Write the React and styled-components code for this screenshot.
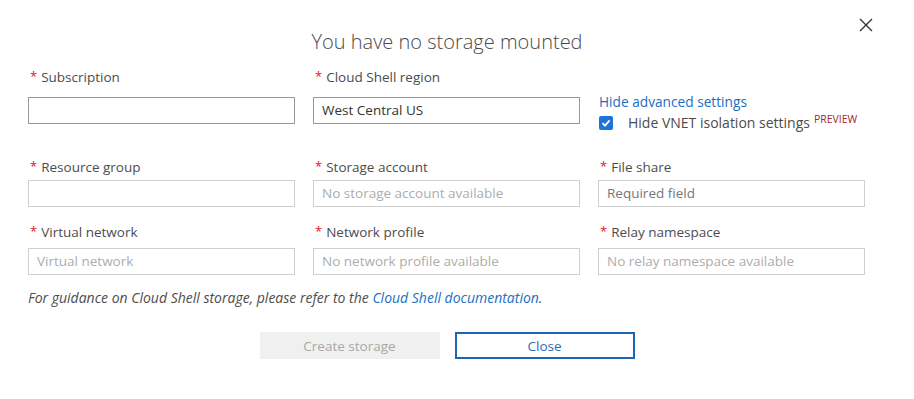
import React from 'react';
import styled, { createGlobalStyle } from 'styled-components';

const font = `"Open Sans", "Noto Sans", sans-serif`;

const GlobalStyle = createGlobalStyle`
  html, body {
    margin: 0;
    padding: 0;
    background: #fff;
  }
  body {
    font-family: ${font};
  }
`;

const Dialog = styled.div`
  position: relative;
  width: 914px;
  height: 399px;
  background: #fff;
  font-family: ${font};
  color: #444;
  overflow: hidden;
`;

const CloseIcon = styled.button`
  position: absolute;
  top: 16px;
  right: 39px;
  width: 18px;
  height: 18px;
  padding: 0;
  border: 0;
  background: none;
  cursor: pointer;
  display: flex;
  align-items: center;
  justify-content: center;
`;

const Title = styled.h1`
  margin: 28px 0 0;
  padding-right: 20px;
  height: 28px;
  line-height: 28px;
  text-align: center;
  font-size: 20px;
  font-weight: 300;
  color: #4a4a4a;
`;

const Row = styled.div`
  display: grid;
  grid-template-columns: repeat(3, 267px);
  column-gap: 18px;
  padding-left: 28px;
  margin-top: ${p => p.$top}px;
  align-items: start;
`;

const Field = styled.div`
  display: flex;
  flex-direction: column;
  gap: ${p => p.$gap}px;
`;

const Label = styled.label`
  height: 20px;
  line-height: 20px;
  font-size: 13.5px;
  color: #4c4c4c;
  white-space: nowrap;
`;

const Star = styled.span`
  color: #e81123;
  font-size: 13px;
  margin: 0 4px 0 2px;
  position: relative;
  top: -1px;
`;

const Input = styled.div`
  box-sizing: border-box;
  height: 27px;
  border: ${p => (p.$strong ? '1.5px solid #999' : '1.5px solid #cfcfcf')};
  padding: 0 8px;
  font-size: 13.5px;
  line-height: 24px;
  color: ${p => (p.$placeholder ? '#adadad' : p.$muted ? '#777' : '#333')};
  white-space: nowrap;
  overflow: hidden;
`;

const Advanced = styled.div`
  display: flex;
  flex-direction: column;
  padding-top: 25px;
  padding-left: 1px;
`;

const Link = styled.a`
  color: #1b6ec2;
  text-decoration: none;
  white-space: nowrap;
`;

const AdvancedLink = styled(Link)`
  font-size: 13.7px;
  line-height: 20px;
  height: 20px;
`;

const CheckRow = styled.div`
  display: flex;
  align-items: center;
  height: 21px;
  font-size: 14px;
  color: #4c4c4c;
  white-space: nowrap;
`;

const Box = styled.span`
  width: 14px;
  height: 14px;
  border-radius: 2px;
  background: #1f72d6;
  display: inline-flex;
  align-items: center;
  justify-content: center;
  margin-right: 15px;
`;

const Preview = styled.sup`
  font-size: 10.5px;
  color: #a4262c;
  margin-left: 4px;
  position: relative;
  top: -4px;
  vertical-align: baseline;
`;

const Guidance = styled.p`
  margin: 13px 0 0 28px;
  font-size: 14px;
  line-height: 20px;
  font-style: italic;
  color: #4c4c4c;
`;

const Buttons = styled.div`
  display: flex;
  justify-content: center;
  gap: 15px;
  margin-top: 24px;
  padding-right: 20px;
`;

const Button = styled.button`
  box-sizing: border-box;
  width: 180px;
  height: 27px;
  font-family: ${font};
  font-size: 13.5px;
  cursor: pointer;
  border: ${p => (p.$primary ? '2px solid #1e64b4' : '0')};
  background: ${p => (p.$primary ? '#fff' : '#f0f0f0')};
  color: ${p => (p.$primary ? '#2a6cbc' : '#a8a8a8')};
`;

const Req = ({ children }) => (
  <Label>
    <Star>*</Star>
    {children}
  </Label>
);

export default function App() {
  return (
    <>
      <GlobalStyle />
      <Dialog>
        <CloseIcon aria-label="Close">
          <svg width="14" height="14" viewBox="0 0 14 14">
            <path d="M1 1 L13 13 M13 1 L1 13" stroke="#333" strokeWidth="1.4" />
          </svg>
        </CloseIcon>
        <Title>You have no storage mounted</Title>

        <Row $top={11}>
          <Field $gap={10}>
            <Req>Subscription</Req>
            <Input $strong />
          </Field>
          <Field $gap={10}>
            <Req>Cloud Shell region</Req>
            <Input $strong>West Central US</Input>
          </Field>
          <Advanced>
            <AdvancedLink href="#">Hide advanced settings</AdvancedLink>
            <CheckRow>
              <Box>
                <svg width="10" height="10" viewBox="0 0 10 10">
                  <path d="M1.5 5.2 L4 7.6 L8.6 2.4" fill="none" stroke="#fff" strokeWidth="1.8" />
                </svg>
              </Box>
              Hide VNET isolation settings
              <Preview>PREVIEW</Preview>
            </CheckRow>
          </Advanced>
        </Row>

        <Row $top={24}>
          <Field $gap={3}>
            <Req>Resource group</Req>
            <Input />
          </Field>
          <Field $gap={3}>
            <Req>Storage account</Req>
            <Input $placeholder>No storage account available</Input>
          </Field>
          <Field $gap={3}>
            <Req>File share</Req>
            <Input $muted>Required field</Input>
          </Field>
        </Row>

        <Row $top={15}>
          <Field $gap={6}>
            <Req>Virtual network</Req>
            <Input $placeholder>Virtual network</Input>
          </Field>
          <Field $gap={6}>
            <Req>Network profile</Req>
            <Input $placeholder>No network profile available</Input>
          </Field>
          <Field $gap={6}>
            <Req>Relay namespace</Req>
            <Input $placeholder>No relay namespace available</Input>
          </Field>
        </Row>

        <Guidance>
          For guidance on Cloud Shell storage, please refer to the{' '}
          <Link href="#">Cloud Shell documentation</Link>.
        </Guidance>

        <Buttons>
          <Button>Create storage</Button>
          <Button $primary>Close</Button>
        </Buttons>
      </Dialog>
    </>
  );
}
